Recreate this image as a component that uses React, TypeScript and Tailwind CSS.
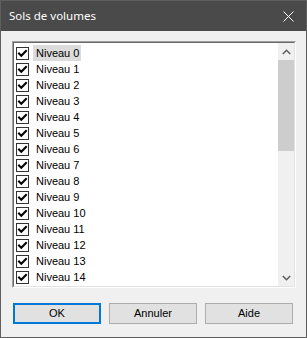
import React from "react";

const Check = () => (
  <div className="w-[13px] h-[13px] border border-[#333333] bg-white flex items-center justify-center shrink-0">
    <svg width="11" height="11" viewBox="0 0 11 11">
      <path d="M2 5.5 L4.3 7.8 L9 3" fill="none" stroke="#000" strokeWidth="2" strokeLinecap="square" />
    </svg>
  </div>
);

export default function App() {
  const rows = Array.from({ length: 15 }, (_, i) => i);
  return (
    <div
      className="w-[307px] h-[338px] border border-[#5f5f5f] bg-[#f0f0f0] flex flex-col overflow-hidden"
      style={{ fontFamily: '"Liberation Sans", Arial, sans-serif' }}
    >
      <div className="h-[30px] bg-[#4a4a4a] flex items-center justify-between pl-[8px] pr-[12px] shrink-0">
        <span className="text-white text-[11.5px]" style={{ fontFamily: '"Noto Sans", sans-serif' }}>
          Sols de volumes
        </span>
        <svg width="11" height="11" viewBox="0 0 11 11">
          <path d="M0.5 0.5 L10.5 10.5 M10.5 0.5 L0.5 10.5" stroke="#ffffff" strokeWidth="1" />
        </svg>
      </div>
      <div className="ml-[11px] mt-[10px] w-[284px] h-[247px] border-t border-l border-t-[#a0a0a0] border-l-[#a0a0a0] border-b border-r border-b-white border-r-white">
        <div className="w-full h-full border-t border-l border-t-[#696969] border-l-[#696969] border-b border-r border-b-[#e3e3e3] border-r-[#e3e3e3] bg-white flex">
          <div className="flex-1 overflow-hidden pt-[2px]">
            {rows.map((i) => (
              <div key={i} className="h-[16px] flex items-center pl-[2px]">
                <Check />
                <span
                  className={`ml-[4px] pl-[3px] pr-[2px] h-[16px] flex items-center text-[11px] text-black ${i === 0 ? "bg-[#dcdcdc]" : ""}`}
                >
                  Niveau {i}
                </span>
              </div>
            ))}
            <div className="h-[16px] flex items-start pl-[2px] pt-[1px]">
              <div className="w-[13px] h-[13px] border border-[#333333] bg-white" />
            </div>
          </div>
          <div className="w-[16px] bg-[#f0f0f0] flex flex-col shrink-0">
            <div className="h-[17px] flex items-center justify-center">
              <svg width="9" height="6" viewBox="0 0 9 6">
                <path d="M0.8 5 L4.5 1.3 L8.2 5" fill="none" stroke="#606060" strokeWidth="1.6" />
              </svg>
            </div>
            <div className="h-[91px] bg-[#cdcdcd]" />
            <div className="flex-1" />
            <div className="h-[17px] flex items-center justify-center">
              <svg width="9" height="6" viewBox="0 0 9 6">
                <path d="M0.8 1 L4.5 4.7 L8.2 1" fill="none" stroke="#606060" strokeWidth="1.6" />
              </svg>
            </div>
          </div>
        </div>
      </div>
      <div className="ml-[12px] mt-[15px] flex gap-[8px]">
        <button className="w-[88px] h-[21px] border-2 border-[#0078d7] bg-[#e1e1e1] text-[11px] text-black flex items-center justify-center">
          OK
        </button>
        <button className="w-[88px] h-[21px] border border-[#adadad] bg-[#e1e1e1] text-[11px] text-black flex items-center justify-center">
          Annuler
        </button>
        <button className="w-[88px] h-[21px] border border-[#adadad] bg-[#e1e1e1] text-[11px] text-black flex items-center justify-center">
          Aide
        </button>
      </div>
    </div>
  );
}
